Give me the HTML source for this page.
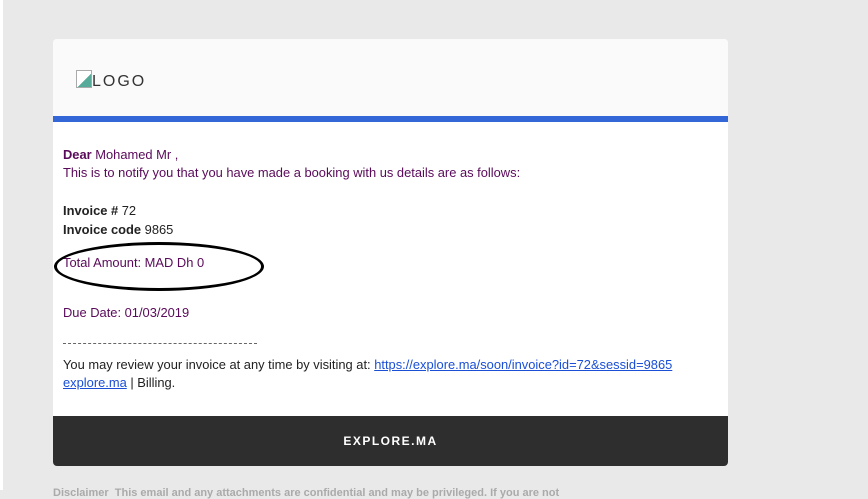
<!DOCTYPE html>
<html><head><meta charset="utf-8"><style>
body{margin:0;width:868px;height:490px;overflow:hidden;background:#e9e9e9;font-family:"Liberation Sans",Arial,sans-serif;position:relative}
.lstrip{position:absolute;left:0;top:0;width:3px;height:490px;background:#fff}
.card{position:absolute;left:53px;top:39px;width:675px;height:427px;background:#fff;border-radius:4px;overflow:hidden}
.hdr{height:77px;background:#fafafa;border-bottom:6px solid #3366d6;position:relative}
.logo{position:absolute;left:23px;top:31px;font-size:16px;letter-spacing:2px;color:#333}
.logo i{display:inline-block;width:14px;height:16px;border:1px solid #aaa;vertical-align:-2px;background:linear-gradient(135deg,#fff 55%,#5a9 56%)}
.t{position:absolute;left:10px;font-size:12.9px;line-height:14px;white-space:nowrap}
.p{color:#5a0a5a}.k{color:#222}
a{color:#1a4fd6;text-decoration:underline}
.ftr{position:absolute;left:0;bottom:0;width:675px;height:50px;background:#2e2e2e;color:#fff;text-align:center;line-height:50px;font-size:12px;font-weight:bold;letter-spacing:1.5px}
.ell{position:absolute;left:54px;top:242px;width:204px;height:43px;border:3.5px solid #000;border-radius:50%}
.bot{position:absolute;left:53px;top:487px;font-size:11px;color:#aaa;font-weight:bold}
.dash{position:absolute;left:10px;top:304px;width:194px;border-top:1px dashed #666}
</style></head><body>
<div class="lstrip"></div>
<div class="card">
<div class="hdr"><div class="logo"><i></i>LOGO</div></div>
<div class="t p" style="top:109px"><b>Dear</b> Mohamed Mr ,</div>
<div class="t p" style="top:127px">This is to notify you that you have made a booking with us details are as follows:</div>
<div class="t k" style="top:165px"><b>Invoice #</b> 72</div>
<div class="t k" style="top:184px"><b>Invoice code</b> 9865</div>
<div class="t p" style="top:217px">Total Amount: MAD Dh 0</div>
<div class="t p" style="top:267px">Due Date: 01/03/2019</div>
<div class="dash"></div>
<div class="t k" style="top:319px">You may review your invoice at any time by visiting at: <a>https://explore.ma/soon/invoice?id=72&amp;sessid=9865</a></div>
<div class="t k" style="top:337px"><a>explore.ma</a> | Billing.</div>
<div class="ftr">EXPLORE.MA</div>
</div>
<div class="ell"></div>
<div class="bot">Disclaimer &nbsp;This email and any attachments are confidential and may be privileged. If you are not</div>
</body></html>
